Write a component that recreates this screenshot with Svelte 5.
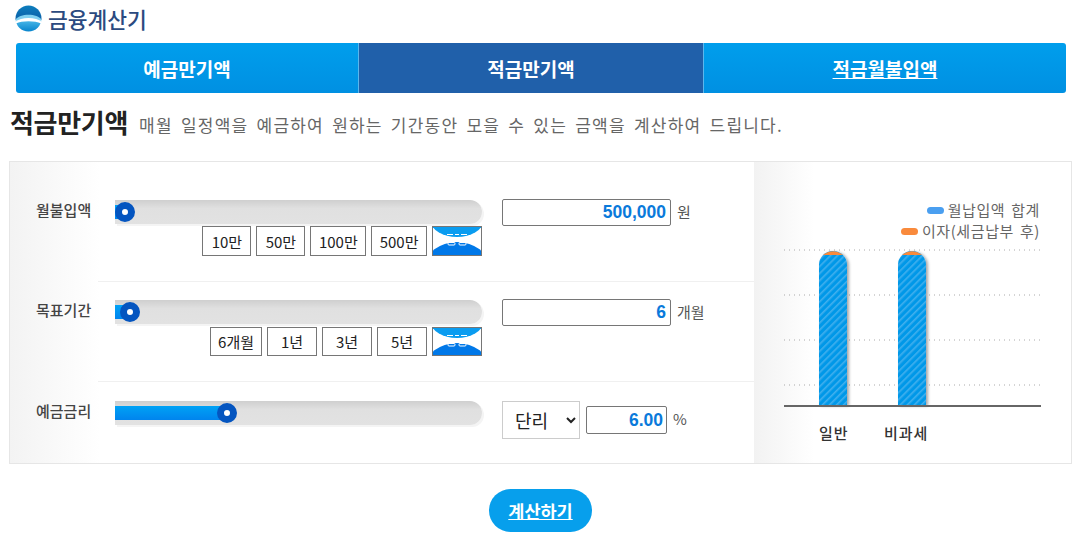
<script>
  const tabs = [
    { label: "예금만기액", active: false, link: false },
    { label: "적금만기액", active: true, link: false },
    { label: "적금월불입액", active: false, link: true },
  ];

  const rows = [
    {
      label: "월불입액",
      fill: 10,
      thumb: 10,
      quick: ["10만", "50만", "100만", "500만"],
      value: "500,000",
      unit: "원",
      cls: "first",
    },
    {
      label: "목표기간",
      fill: 15,
      thumb: 15,
      quick: ["6개월", "1년", "3년", "5년"],
      value: "6",
      unit: "개월",
      cls: "second",
    },
    {
      label: "예금금리",
      fill: 112,
      thumb: 112,
      quick: [],
      value: "6.00",
      unit: "%",
      cls: "third",
    },
  ];

  const gridLines = [4, 49, 94, 139];
  const bars = [
    { x: 59, label: "일반" },
    { x: 138, label: "비과세" },
  ];
</script>

<div class="page">
  <header class="logo">
    <svg width="27" height="27" viewBox="0 0 27 27" aria-hidden="true">
      <defs>
        <linearGradient id="logoTop" x1="0" y1="0" x2="0" y2="1">
          <stop offset="0" stop-color="#0d7fbe" />
          <stop offset="1" stop-color="#0a5fa8" />
        </linearGradient>
        <linearGradient id="logoBottom" x1="0" y1="0" x2="0" y2="1">
          <stop offset="0" stop-color="#45b4e6" />
          <stop offset="1" stop-color="#0583cc" />
        </linearGradient>
        <clipPath id="logoClip"><circle cx="13.5" cy="13.5" r="13" /></clipPath>
      </defs>
      <g clip-path="url(#logoClip)">
        <rect width="27" height="27" fill="#fff" />
        <rect width="27" height="15" fill="url(#logoTop)" />
        <path d="M0 15 C5 8 22 8 27 15 V17 H0Z" fill="#7fd0f0" />
        <path d="M0 17 C6 11.5 21 11.5 27 17 V19 H0Z" fill="#fff" />
        <path d="M0 19 H27 V27 H0Z" fill="#fff" />
        <path d="M1 18.5 C7 15.5 20 15.5 26 18.5 V27 H1Z" fill="url(#logoBottom)" />
      </g>
    </svg>
    <span>금융계산기</span>
  </header>

  <nav class="tabs">
    {#each tabs as tab}
      <div class="tab" class:active={tab.active} class:link={tab.link}>{tab.label}</div>
    {/each}
  </nav>

  <div class="heading">
    <h1>적금만기액</h1>
    <p>매월 일정액을 예금하여 원하는 기간동안 모을 수 있는 금액을 계산하여 드립니다.</p>
  </div>

  <section class="panel">
    <div class="form">
      {#each rows as row}
        <div class="row {row.cls}">
          <div class="label">{row.label}</div>
          <div class="control">
            <div class="track">
              <div class="fill" style="width: {row.fill}px"></div>
              <div class="thumb" style="left: {row.thumb - 10}px"></div>
            </div>
            {#if row.quick.length}
              <div class="quick">
                {#each row.quick as q}
                  <button class="q">{q}</button>
                {/each}
                <div class="q-img">
                  <svg width="48" height="28" viewBox="0 0 48 28" aria-hidden="true">
                    <ellipse cx="24" cy="-6" rx="26" ry="16" fill="#0a9cf0" />
                    <ellipse cx="24" cy="40" rx="32" ry="25" fill="#0078e8" />
                    <path d="M14 7.5h6M22 7.5h4M28 7.5h6" stroke="#fff" stroke-width="1.2" />
                    <rect x="15" y="15.5" width="7" height="2.5" rx="1" fill="none" stroke="#fff" />
                    <rect x="26" y="15.5" width="7" height="2.5" rx="1" fill="none" stroke="#fff" />
                  </svg>
                </div>
              </div>
            {/if}
          </div>
          <div class="entry">
            {#if row.cls === "third"}
              <select class="sel"><option>단리</option><option>복리</option></select>
            {/if}
            <input class="num" value={row.value} />
            <span class="unit">{row.unit}</span>
          </div>
        </div>
      {/each}
    </div>

    <div class="chart">
      <div class="legend">
        <div><i class="swatch blue"></i>월납입액 합계</div>
        <div><i class="swatch orange"></i>이자(세금납부 후)</div>
      </div>
      <svg class="plot" width="317" height="200" viewBox="0 0 317 200" aria-label="chart">
        <defs>
          <pattern id="stripes" width="5" height="5" patternUnits="userSpaceOnUse" patternTransform="rotate(45)">
            <rect width="5" height="5" fill="#0598e8" />
            <rect width="1.6" height="5" fill="#3fb0ee" />
          </pattern>
          <filter id="barShadow" x="-20%" y="-5%" width="150%" height="110%">
            <feDropShadow dx="2" dy="1" stdDeviation="1.5" flood-color="#000" flood-opacity="0.35" />
          </filter>
        </defs>
        {#each gridLines as y}
          <line x1="30" x2="286" y1={y} y2={y} stroke="#aaa" stroke-dasharray="1 4" />
        {/each}
        {#each bars as bar}
          <g>
            <path
              d="M{bar.x + 6} 159 V19 a14 14 0 0 1 28 0 V159Z"
              fill="url(#stripes)"
              filter="url(#barShadow)"
            />
            <path d="M{bar.x + 10} 9 a15 15 0 0 1 20 0 Z" fill="#f98a3c" />
          </g>
        {/each}
        <rect x="30" y="159" width="257" height="2" fill="#666" />
      </svg>
      <div class="xlabels">
        {#each bars as bar}
          <span>{bar.label}</span>
        {/each}
      </div>
    </div>
  </section>

  <div class="actions">
    <button class="calc">계산하기</button>
  </div>
</div>

<style>
  :global(body) {
    margin: 0;
    background: #fff;
    font-family: "Noto Sans CJK KR", "Liberation Sans", sans-serif;
  }
  .page {
    width: 1091px;
    height: 547px;
    overflow: hidden;
    color: #333;
  }
  .logo {
    display: flex;
    align-items: center;
    gap: 6px;
    height: 37px;
    padding: 0 0 6px 15px;
    font-size: 21.5px;
    font-weight: 500;
    color: #2b4a80;
  }
  .logo svg {
    flex: none;
  }
  .tabs {
    display: grid;
    grid-template-columns: 343px 345px 362px;
    margin: 0 25px 0 16px;
    height: 50px;
    border-radius: 3px;
    overflow: hidden;
    background: linear-gradient(#009eec, #0090e2);
  }
  .tab {
    display: flex;
    align-items: center;
    justify-content: center;
    color: #fff;
    font-size: 19px;
    font-weight: 700;
    border-right: 1px solid #5cb6ec;
  }
  .tab:last-child {
    border-right: 0;
  }
  .tab.active {
    background: #2060aa;
  }
  .tab.link {
    text-decoration: underline;
  }
  .heading {
    display: flex;
    align-items: center;
    gap: 11px;
    height: 56px;
    padding: 0 0 0 10px;
    margin-bottom: 12px;
  }
  .heading h1 {
    margin: 0;
    font-size: 26px;
    font-weight: 700;
    color: #222;
    letter-spacing: -0.3px;
  }
  .heading p {
    margin: 6px 0 0;
    font-size: 17px;
    color: #666;
    letter-spacing: 1.2px;
    word-spacing: 3.2px;
  }
  .panel {
    display: flex;
    margin-left: 9px;
    width: 1063px;
    height: 303px;
    box-sizing: border-box;
    border: 1px solid #e6e6e6;
  }
  .form {
    width: 744px;
    background: linear-gradient(to right, #f3f3f3, #fff 90px);
  }
  .row {
    display: flex;
    box-sizing: border-box;
    background: linear-gradient(to right, transparent 88px, #f0f0f0 88px) left bottom / 100% 1px no-repeat;
  }
  .row.first {
    height: 120px;
    padding-top: 38px;
  }
  .row.second {
    height: 100px;
    padding-top: 18px;
  }
  .row.third {
    height: 81px;
    padding-top: 19px;
    background: none;
  }
  .label {
    width: 105px;
    margin-top: -1px;
    padding-left: 26px;
    box-sizing: border-box;
    font-size: 15px;
    font-weight: 500;
    color: #444;
  }
  .control {
    width: 367px;
  }
  .track {
    position: relative;
    height: 24px;
    background: linear-gradient(#cfcfcf, #e0e0e0 35%, #e2e2e2);
    border-radius: 0 12px 12px 0;
    box-shadow: 2px 2px 0 #f4f4f4;
  }
  .fill {
    position: absolute;
    left: 0;
    top: 5px;
    height: 14px;
    background: linear-gradient(#00a2f5, #0084ee);
  }
  .thumb {
    position: absolute;
    top: 2px;
    width: 20px;
    height: 20px;
    box-sizing: border-box;
    border-radius: 50%;
    background: #fff;
    border: 7px solid #0455c0;
  }
  .quick {
    display: flex;
    justify-content: flex-end;
    gap: 5px;
    margin-top: 2px;
  }
  .second .quick {
    margin-top: 3px;
  }
  .second .q,
  .second .q-img {
    height: 29px;
  }
  .q {
    min-width: 49px;
    height: 30px;
    padding: 0 7.5px;
    box-sizing: border-box;
    background: #fff;
    border: 1px solid #767676;
    font: 15px "Noto Sans CJK KR", sans-serif;
    color: #222;
  }
  .second .q {
    min-width: 50px;
    padding: 0 7px;
  }
  .q-img {
    width: 50px;
    height: 30px;
    box-sizing: border-box;
    border: 1px solid #767676;
    overflow: hidden;
  }
  .q-img svg {
    display: block;
  }
  .entry {
    display: flex;
    align-items: flex-start;
    gap: 6px;
    margin: -1px 0 0 20px;
    font-size: 15px;
    color: #555;
  }
  .num {
    width: 169px;
    height: 27px;
    box-sizing: border-box;
    border: 1px solid #767676;
    border-radius: 2px;
    padding: 0 4px;
    text-align: right;
    color: #0a7adb;
    font: 700 17.5px "Liberation Sans", Arial, sans-serif;
  }
  .unit {
    line-height: 25px;
  }
  .third .entry {
    margin-top: 0;
  }
  .third .num {
    width: 81px;
    height: 28px;
    margin-top: 5px;
    padding-right: 3px;
  }
  .third .unit {
    margin-top: 5px;
  }
  .sel {
    width: 78px;
    height: 38px;
    box-sizing: border-box;
    border: 1px solid #ccc;
    background: #fff;
    padding-left: 8px;
    font: 18px "Noto Sans CJK KR", sans-serif;
    color: #222;
  }
  .chart {
    flex: 1;
    position: relative;
    background: linear-gradient(to right, #f2f2f2, #fff 60px);
  }
  .legend {
    padding: 37px 31px 0 0;
    text-align: right;
    font-size: 15px;
    letter-spacing: 0.6px;
    word-spacing: 2px;
    color: #666;
    line-height: 21px;
  }
  .swatch {
    display: inline-block;
    width: 17px;
    height: 7px;
    margin-right: 4px;
    border-radius: 4px;
    vertical-align: 2px;
  }
  .swatch.blue {
    background: #4a9ff0;
  }
  .swatch.orange {
    background: #f98a3c;
  }
  .plot {
    position: absolute;
    left: 0;
    top: 84px;
  }
  .xlabels {
    position: absolute;
    left: 0;
    top: 260px;
    width: 100%;
    font-size: 15px;
    font-weight: 500;
    letter-spacing: 0.9px;
    color: #333;
  }
  .xlabels span:first-child {
    position: absolute;
    left: 65px;
  }
  .xlabels span:last-child {
    position: absolute;
    left: 130px;
  }
  .actions {
    display: flex;
    justify-content: center;
    padding: 25px 0 0 0;
    width: 1081px;
  }
  .calc {
    width: 103px;
    height: 43px;
    border: 0;
    border-radius: 22px;
    background: #079fec;
    color: #fff;
    font: 700 17.5px "Noto Sans CJK KR", sans-serif;
    text-decoration: underline;
  }
</style>
